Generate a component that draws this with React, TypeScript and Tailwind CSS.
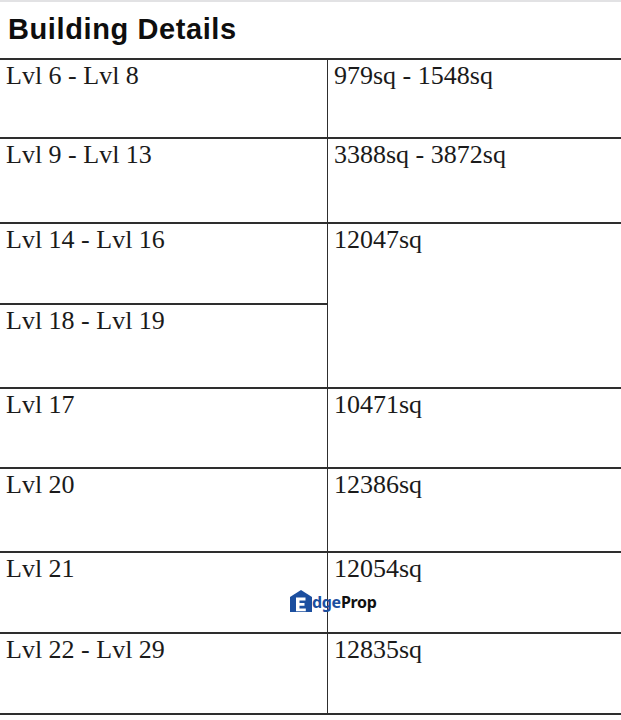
import React from "react";

type Row = { left: string; right?: string; span?: boolean; skipRight?: boolean };

const rows: Row[] = [
  { left: "Lvl 6 - Lvl 8", right: "979sq - 1548sq" },
  { left: "Lvl 9 - Lvl 13", right: "3388sq - 3872sq" },
  { left: "Lvl 14 - Lvl 16", right: "12047sq", span: true },
  { left: "Lvl 18 - Lvl 19", skipRight: true },
  { left: "Lvl 17", right: "10471sq" },
  { left: "Lvl 20", right: "12386sq" },
  { left: "Lvl 21", right: "12054sq" },
  { left: "Lvl 22 - Lvl 29", right: "12835sq" },
];

function EdgePropLogo() {
  return (
    <div className="absolute left-[290px] top-[589px] flex items-end pointer-events-none select-none">
      <svg width="22" height="23" viewBox="0 0 22 23" className="block">
        <path d="M0 8 L11 1 L22 8 L22 23 L0 23 Z" fill="#1c4f9f" />
        <path d="M6 8.5 H15.5 V11.5 H9.5 V14 H14.5 V16.8 H9.5 V19.5 H15.8 V22.3 H6 Z" fill="#ffffff" />
      </svg>
      <span className="font-['Noto_Sans','Liberation_Sans',sans-serif] text-[16px] font-bold leading-[18px] tracking-[-0.3px] mb-[1px]">
        <span className="text-[#1c4f9f]">dge</span>
        <span className="text-[#111111]">Prop</span>
      </span>
    </div>
  );
}

export default function App() {
  return (
    <div className="relative w-[621px] h-[720px] bg-white overflow-hidden">
      <div className="h-[2px] bg-[#e2e2e4]" />
      <div className="h-[56px] flex items-center pl-[8px]">
        <h1 className="font-['Liberation_Sans',Arial,sans-serif] text-[29px] font-bold text-[#0e0e0e] leading-none tracking-[0.6px] mt-[-2px]">
          Building Details
        </h1>
      </div>
      <div className="font-['Liberation_Serif','Times_New_Roman',Times,serif] font-normal grid grid-cols-[328px_1fr] grid-rows-[79px_85px_81px_84px_80px_84px_81px_81px] border-t-2 border-[#2e2e2e] text-[26px] leading-[30px] text-[#1a1a1a]">
        {rows.map((r, i) => (
          <React.Fragment key={i}>
            <div className="border-b-2 border-r-[1.5px] border-[#2e2e2e] pl-[6px] pt-[1px]">
              {r.left}
            </div>
            {!r.skipRight && (
              <div
                className={
                  "border-b-2 border-[#2e2e2e] pl-[6px] pt-[1px] " +
                  (r.span ? "row-span-2" : "")
                }
              >
                {r.right}
              </div>
            )}
          </React.Fragment>
        ))}
      </div>
      <EdgePropLogo />
    </div>
  );
}
